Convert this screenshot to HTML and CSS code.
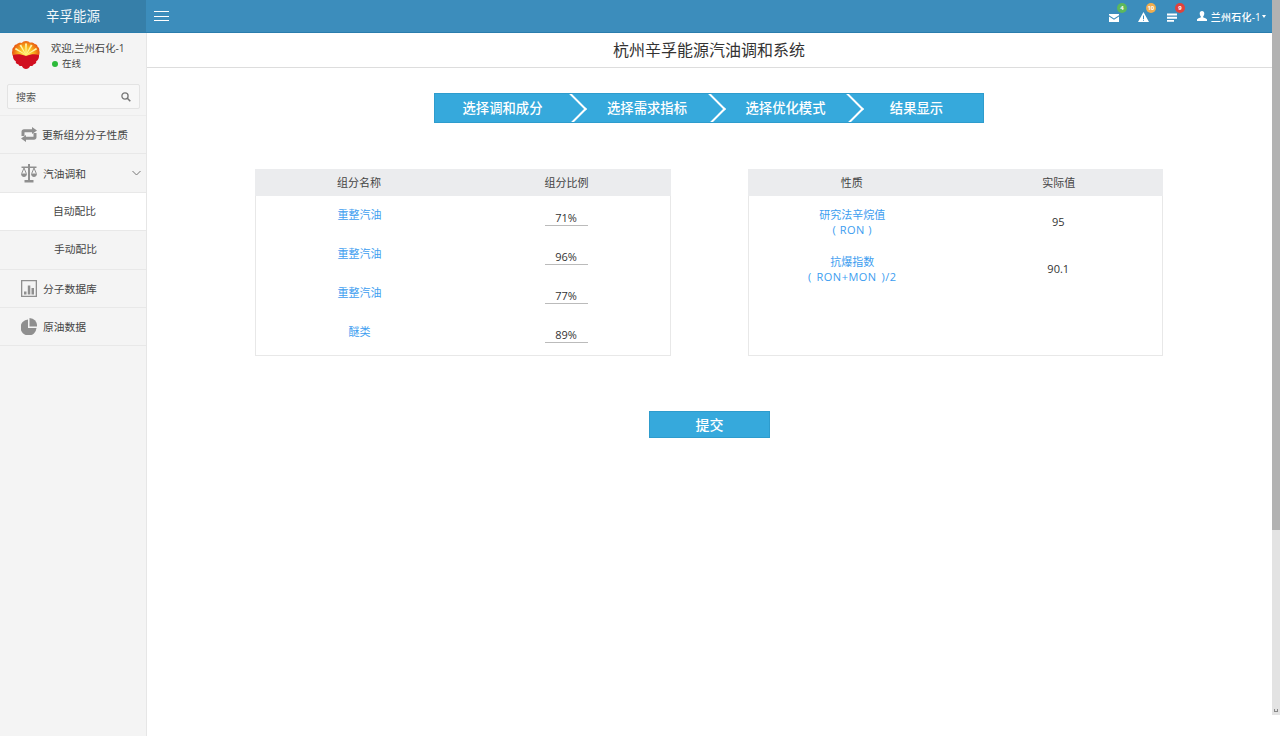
FILE: index.html
```html
<!DOCTYPE html>
<html lang="zh">
<head>
<meta charset="utf-8">
<title>杭州辛孚能源汽油调和系统</title>
<link rel="stylesheet" href="styles.css">
</head>
<body>
<div class="page">
  <div class="app">
    <header class="topbar">
      <div class="brand">辛孚能源</div>
      <div class="navbar">
        <div class="burger"><span></span><span></span><span></span></div>
        <div class="tools">
          <div class="tool">
            <svg class="tool-icon" width="10" height="8" viewBox="0 0 10 8"><path d="M0 0h10v1.300L5 4.500 0 1.300z" fill="#fff"/><path d="M0 2.600l5 3.100 5-3.100V8H0z" fill="#fff"/></svg>
            <span class="badge badge-green">4</span>
          </div>
          <div class="tool">
            <svg class="tool-icon" width="11" height="10" viewBox="0 0 11 10"><path fill-rule="evenodd" d="M5.500 0L11 10H0zM5 3.500v3.500h1V3.500zM5 7.800v1h1v-1z" fill="#fff"/></svg>
            <span class="badge badge-orange">10</span>
          </div>
          <div class="tool">
            <svg class="tool-icon" width="10" height="9" viewBox="0 0 10 9"><path d="M0 .5h10v2H0zM0 3.700h10v2H0zM0 7h7v1.700H0z" fill="#fff"/></svg>
            <span class="badge badge-red">9</span>
          </div>
          <div class="account">
            <svg width="10" height="10" viewBox="0 0 10 10"><path d="M5 0c1.500 0 2.300 1 2.300 2.500S6.500 5.300 6 6c0 .6 3.500 1.300 4 2.500V10H0V8.500C.5 7.300 4 6.600 4 6c-.5-.7-1.300-2-1.300-3.500S3.500 0 5 0z" fill="#fff"/></svg>
            <span class="account-name">兰州石化-1</span>
            <span class="caret"></span>
          </div>
        </div>
      </div>
    </header>
    <div class="body">
      <aside class="sidebar">
        <div class="user-panel">
          <svg class="logo" width="28" height="28" viewBox="0 0 28 28">
            <defs>
              <radialGradient id="fan" gradientUnits="userSpaceOnUse" cx="14" cy="13" r="14">
                <stop offset="0" stop-color="#fff36a"/>
                <stop offset=".5" stop-color="#fbb81e"/>
                <stop offset="1" stop-color="#e8540f"/>
              </radialGradient>
            </defs>
            <path d="M14 0c1.900 0 3.200.7 3.900 1.800 1.900-.5 3.800 0 4.700 1.300 1.600 0 2.800 1 3 2.700 1.300.7 1.900 2.100 1.600 3.800.6 1.400.5 3.300-.4 5.400H.8C-.1 13.100-.2 11.200.4 9.800.1 8.100.7 6.700 2 6c.3-1.700 1.400-2.700 3-2.700C5.900 2 7.800 1.500 9.700 2 10.800.7 12.100 0 14 0z" fill="url(#fan)"/>
            <path d="M14 14L13 2.500h2zM14 14L7.500 4.500l1.700-.9zM14 14L18.800 3.600l1.700.9zM14 14L3 8.500l.8-1.700zM14 14L24.200 6.800l.8 1.700z" fill="#fff7a8"/>
            <path d="M1 14c4-1 8-1 13 1 5-2 9-2 13-1 .3 2.900-.7 5-2.800 6.200.3 1.700-.6 2.900-2.500 3-.6 1.500-1.900 2.200-3.600 1.800C17.300 26.700 15.700 28 14 28s-3.300-1.300-4.100-3c-1.700.4-3-.3-3.600-1.800-1.900-.1-2.800-1.300-2.500-3C1.700 19 .7 16.900 1 14z" fill="#d10f20"/>
          </svg>
          <div class="user-info">
            <div class="welcome">欢迎,兰州石化-1</div>
            <div class="status"><span class="dot"></span>在线</div>
          </div>
        </div>
        <div class="search">
          <span>搜索</span>
          <svg width="10" height="10" viewBox="0 0 10 10"><circle cx="4" cy="4" r="3.100" fill="none" stroke="#777" stroke-width="1.300"/><path d="M6.300 6.300L9.300 9.300" stroke="#777" stroke-width="1.600"/></svg>
        </div>
        <nav class="menu">
          <div class="item">
            <svg class="item-icon icon-swap" width="16" height="15" viewBox="0 0 16 15"><path d="M3 2.300h8V0l5 3.500L11 7V5.300H3.500V9H.5V4.800c0-1.500 1-2.500 2.500-2.500zM13 12.700H5V15L0 11.500 5 8v1.700h7.500V6h3v4.200c0 1.500-1 2.500-2.500 2.500z" fill="#8f8f8f"/></svg>
            <span>更新组分分子性质</span>
          </div>
          <div class="item item-open">
            <svg class="item-icon" width="16" height="19" viewBox="0 0 16 19">
              <path d="M7 0h2v2.500h6.500v1.500H9v12h3.500v2.500h-9V16H7V4H.5V2.500H7z" fill="#8f8f8f"/>
              <path d="M3 4L.7 9.500M3 4l2.300 5.500M13 4l-2.300 5.500M13 4l2.300 5.500" stroke="#8f8f8f" fill="none"/>
              <path d="M0 9.500h6c0 2-1.300 3.500-3 3.500S0 11.500 0 9.500zM10 9.500h6c0 2-1.300 3.500-3 3.500s-3-1.500-3-3.500z" fill="#8f8f8f"/>
            </svg>
            <span>汽油调和</span>
            <svg class="chev" width="9" height="6" viewBox="0 0 9 6"><path d="M.5 1l4 4 4-4" fill="none" stroke="#777"/></svg>
          </div>
          <div class="item sub active"><span>自动配比</span></div>
          <div class="item sub sub-2"><span>手动配比</span></div>
          <div class="item">
            <svg class="item-icon" width="16" height="17" viewBox="0 0 16 17"><path fill-rule="evenodd" d="M0 0h16v17H0zM1.300 1.300v14.400h13.400V1.300z" fill="#8f8f8f"/><path d="M3 11.500h2.500V14.500H3zM6.800 5.500h2.500v9H6.800zM10.500 8h2.500v6.500h-2.500z" fill="#8f8f8f"/></svg>
            <span>分子数据库</span>
          </div>
          <div class="item">
            <svg class="item-icon" width="16" height="17" viewBox="0 0 16 17"><path d="M7 1.500V10h8.500A8 8 0 1 1 7 1.500z" fill="#8f8f8f"/><path d="M8.500 0A7.600 7.600 0 0 1 16 8.500H8.500z" fill="#8f8f8f"/></svg>
            <span>原油数据</span>
          </div>
        </nav>
      </aside>
      <main class="content">
        <h1 class="title">杭州辛孚能源汽油调和系统</h1>
        <div class="steps">
          <div class="step step-1">选择调和成分</div>
          <div class="step step-2">选择需求指标</div>
          <div class="step step-3">选择优化模式</div>
          <div class="step step-4">结果显示</div>
        </div>
        <div class="tables">
          <section class="panel">
            <div class="row head"><div>组分名称</div><div>组分比例</div></div>
            <div class="row comp"><a class="name">重整汽油</a><div><span class="ratio">71%</span></div></div>
            <div class="row comp"><a class="name">重整汽油</a><div><span class="ratio">96%</span></div></div>
            <div class="row comp"><a class="name">重整汽油</a><div><span class="ratio">77%</span></div></div>
            <div class="row comp"><a class="name">醚类</a><div><span class="ratio">89%</span></div></div>
          </section>
          <section class="panel panel-props">
            <div class="row head"><div>性质</div><div>实际值</div></div>
            <div class="row prop"><a class="name">研究法辛烷值<br><span class="formula formula-short">( RON )</span></a><div class="value">95</div></div>
            <div class="row prop"><a class="name">抗爆指数<br><span class="formula">( RON+MON )/2</span></a><div class="value">90.1</div></div>
          </section>
        </div>
        <button class="submit" type="button">提交</button>
      </main>
    </div>
  </div>
  <div class="scrollbar"><div class="thumb"></div><div class="track"><span class="arrow"></span></div></div>
</div>
</body>
</html>
```
FILE: styles.css
```css
* { box-sizing: border-box; }
html, body { margin: 0; height: 100%; overflow: hidden; background: #fff; }
body { font-family: "Open Sans", "Noto Sans CJK SC", "Noto Sans", sans-serif; font-size: 11px; color: #333; }
.page { display: flex; height: 736px; }
.app { flex: 1; min-width: 0; display: flex; flex-direction: column; }

.topbar { display: flex; height: 33px; flex: none; background: #3c8dbc; border-bottom: 1px solid #2a7dad; }
.brand { width: 146px; line-height: 33px; text-align: center; color: #f2f7fa; font-size: 13.500px; background: #367fa9; }
.navbar { flex: 1; display: flex; align-items: center; justify-content: space-between; padding: 0 6px 0 8px; }
.burger { display: flex; flex-direction: column; gap: 3.500px; width: 15px; }
.burger span { height: 1px; background: #fff; }
.tools { display: flex; align-items: center; }
.tool { position: relative; width: 29px; height: 12px; display: flex; align-items: flex-end; }
.badge { position: absolute; left: 8px; top: -7px; width: 10px; height: 10px; border-radius: 50%; font-size: 6px; line-height: 10px; text-align: center; color: #fff; font-weight: 700; }
.badge-green { background: #5cb85c; }
.badge-orange { background: #f0ad4e; }
.badge-red { background: #e0423c; }
.account { display: flex; align-items: center; gap: 4px; margin-left: 1px; color: #fff; font-size: 10px; font-weight: 500; }
.account-name { letter-spacing: .2px; }
.caret { width: 0; height: 0; border-left: 2.500px solid transparent; border-right: 2.500px solid transparent; border-top: 3px solid #fff; margin-left: -3px; }

.body { flex: 1; display: flex; min-height: 0; }
.sidebar { width: 147px; flex: none; background: #f4f4f4; border-right: 1px solid #e6e6e6; }
.user-panel { display: flex; height: 51px; padding: 8px 0 0 12px; }
.user-info { margin-left: 11px; }
.welcome { line-height: 15px; font-size: 10.300px; color: #444; }
.status { display: flex; align-items: center; gap: 4px; line-height: 15px; font-size: 9.500px; color: #444; }
.dot { width: 6px; height: 6px; margin-left: 1px; border-radius: 50%; background: #2dba3a; }
.search { display: flex; align-items: center; justify-content: space-between; width: 133px; height: 25px; margin-left: 7px; padding: 0 8px 0 8px; background: #f7f7f7; border: 1px solid #e3e3e3; border-radius: 2px; font-size: 10px; color: #555; }
.menu { margin-top: 6px; border-top: 1px solid #ececec; }
.item { position: relative; display: flex; align-items: center; height: 38.400px; padding-left: 21px; border-bottom: 1px solid #e8e8e8; font-size: 10.750px; color: #444; }
.item-icon { flex: none; margin-right: 6px; }
.icon-swap { margin-right: 5px; }
.chev { position: absolute; right: 5px; top: 16px; }
.item.sub { padding-left: 3px; padding-bottom: 2px; justify-content: center; }
.item.sub-2 { padding-left: 5px; }
.item.active { background: #fff; }

.content { flex: 1; min-width: 0; display: flex; flex-direction: column; align-items: center; }
.title { align-self: stretch; height: 35px; margin: 0; padding-right: 1px; text-align: center; font-size: 16px; font-weight: 400; line-height: 34px; color: #333; border-bottom: 1px solid #ddd; }
.steps { display: flex; width: 550px; height: 30px; margin: 25px 2px 0 0; overflow: hidden; background: #36a9dc; border: 1px solid #2e9ccd; }
.step { position: relative; flex: none; line-height: 28px; text-align: center; color: #fff; font-size: 13.330px; font-weight: 500; }
.step-1 { width: 135px; padding-left: 1px; }
.step-2 { width: 139px; padding-left: 16px; }
.step-3 { width: 138px; padding-left: 16px; }
.step-4 { width: 136px; padding-left: 4px; }
.step-1::after, .step-2::after, .step-3::after { content: ""; position: absolute; right: -12px; top: 3px; width: 22px; height: 22px; transform: rotate(45deg); border-top: 2.500px solid #fff; border-right: 2.500px solid #fff; }
.tables { display: flex; gap: 77px; margin: 46px 2px 0 0; }
.panel { width: 416px; height: 187px; border: 1px solid #e8e8e8; border-top: 0; }
.panel-props { width: 415px; }
.row { display: grid; grid-template-columns: 1fr 1fr; text-align: center; }
.head { height: 27px; margin: 0 -1px; line-height: 27px; background: #ebecee; color: #444; }
.head > div:first-child { padding-left: 1px; }
.name { padding-left: 1px; color: #3c9df0; line-height: 15px; }
.formula { letter-spacing: .5px; word-spacing: 1.500px; }
.formula-short { word-spacing: 0; }
.comp { height: 39px; }
.comp .name { padding-top: 11px; }
.ratio { display: inline-block; width: 43px; height: 16px; margin-top: 14px; line-height: 15px; border-bottom: 1px solid #bbb; color: #333; }
.prop { height: 47px; }
.prop .name { padding-top: 11px; }
.value { align-self: center; padding-top: 3px; line-height: 15px; color: #333; }
.submit { width: 121px; height: 27px; margin-top: 55px; padding: 0; background: #36a9dc; border: 1px solid #2e9ccd; color: #fff; font-family: inherit; font-size: 14px; font-weight: 500; line-height: 25px; }

.scrollbar { width: 8px; flex: none; display: flex; flex-direction: column; height: 715px; }
.thumb { height: 530px; background: #b2b2b2; }
.track { position: relative; flex: 1; background: #e3e3e3; }
.arrow { position: absolute; left: 2px; bottom: 3px; width: 4px; height: 3px; border-left: 1px solid #888; border-right: 1px solid #888; border-bottom: 1px solid #888; }
```
